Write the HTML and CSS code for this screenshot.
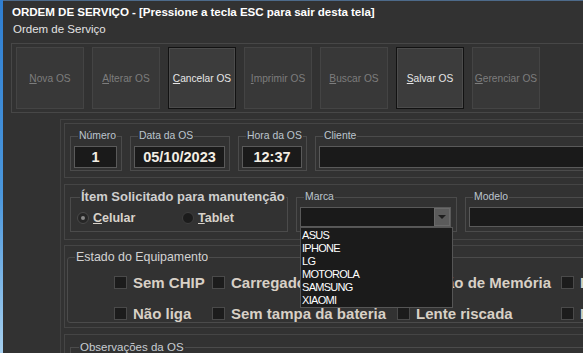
FILE: index.html
```html
<!DOCTYPE html>
<html lang="pt-BR">
<head>
<meta charset="utf-8">
<title>Ordem de Serviço</title>
<link rel="stylesheet" href="styles.css">
</head>
<body>
<div class="window">
  <div class="edge"></div>
  <div class="content">
    <div class="title">ORDEM DE SERVIÇO - [Pressione a tecla ESC para sair desta tela]</div>
    <div class="subtitle">Ordem de Serviço</div>

    <div class="toolbar">
      <div class="tbtn"><span><u>N</u>ova OS</span></div>
      <div class="tbtn"><span><u>A</u>lterar OS</span></div>
      <div class="tbtn on"><span><u>C</u>ancelar OS</span></div>
      <div class="tbtn"><span><u>I</u>mprimir OS</span></div>
      <div class="tbtn"><span><u>B</u>uscar OS</span></div>
      <div class="tbtn on"><span><u>S</u>alvar OS</span></div>
      <div class="tbtn"><span><u>G</u>erenciar OS</span></div>
    </div>

    <div class="outer">
      <div class="section s1">
        <fieldset class="grp g-num"><legend>Número</legend><div class="field">1</div></fieldset>
        <fieldset class="grp g-data"><legend>Data da OS</legend><div class="field">05/10/2023</div></fieldset>
        <fieldset class="grp g-hora"><legend>Hora da OS</legend><div class="field">12:37</div></fieldset>
        <fieldset class="grp g-cli"><legend>Cliente</legend><div class="field"></div></fieldset>
      </div>

      <div class="section s2">
        <fieldset class="grp g-item"><legend>Ítem Solicitado para manutenção</legend>
          <div class="radios">
            <div class="radio-opt"><span class="radio checked"></span><span class="rlabel"><u>C</u>elular</span></div>
            <div class="radio-opt"><span class="radio"></span><span class="rlabel"><u>T</u>ablet</span></div>
          </div>
        </fieldset>
        <fieldset class="grp g-marca"><legend>Marca</legend>
          <div class="combo">
            <div class="combo-text"></div>
            <div class="combo-btn"><span class="tri"></span></div>
            <ul class="droplist">
              <li>ASUS</li>
              <li>IPHONE</li>
              <li>LG</li>
              <li>MOTOROLA</li>
              <li>SAMSUNG</li>
              <li>XIAOMI</li>
            </ul>
          </div>
        </fieldset>
        <fieldset class="grp g-modelo"><legend>Modelo</legend><div class="field"></div></fieldset>
      </div>

      <div class="section s3">
        <fieldset class="grp g-estado"><legend>Estado do Equipamento</legend>
          <div class="checks">
            <div class="chk"><span class="box"></span><span>Sem CHIP</span></div>
            <div class="chk"><span class="box"></span><span>Carregador</span></div>
            <div class="chk"><span class="box"></span><span>Cartão de Memória</span></div>
            <div class="chk"><span class="box"></span><span>Liga</span></div>
            <div class="chk"><span class="box"></span><span>Não liga</span></div>
            <div class="chk"><span class="box"></span><span>Sem tampa da bateria</span></div>
            <div class="chk"><span class="box"></span><span>Lente riscada</span></div>
            <div class="chk"><span class="box"></span><span>Display</span></div>
          </div>
        </fieldset>
      </div>

      <div class="section s4">
        <fieldset class="grp g-obs"><legend>Observações da OS</legend><div class="memo"></div></fieldset>
      </div>
    </div>
  </div>
</div>
</body>
</html>
```

FILE: styles.css
```css
* { box-sizing: border-box; }
html, body { margin: 0; padding: 0; height: 100%; overflow: hidden; background: #323232; }
body { font-family: "Liberation Sans", Arial, sans-serif; color: #ddd; }

.window { display: flex; width: 583px; height: 353px; overflow: hidden; }
.edge { width: 3px; flex: none; background: linear-gradient(#2f7ed0, #4b97dc 55%, #a6cfee); }
.content { flex: 1; min-width: 0; border-top: 1px solid #4d6a8a; }

.title { font-weight: bold; font-size: 11.6px; line-height: 14px; color: #fff; padding: 4px 0 0 9px; white-space: nowrap; letter-spacing: -0.05px; }
.subtitle { font-size: 11.5px; line-height: 14px; color: #e2e2e2; margin: 3px 0 0 10px; white-space: nowrap; }

.toolbar { margin: 7px 0 0 8px; border: 1px solid #474747; border-right: none; padding: 3px 4px; display: flex; gap: 8px; width: 620px; }
.tbtn { width: 68px; height: 62px; flex: none; background: #383838; border: 1px solid #444; display: flex; align-items: center; justify-content: center; font-size: 10.2px; color: #7d7d7d; white-space: nowrap; }
.tbtn.on { border-color: #121212; box-shadow: inset 0 0 0 1px #4c4c4c; background: #3c3c3c; color: #e6e6e6; }
.tbtn u { text-underline-offset: 1px; }

.outer { margin: 6px 0 0 57px; border: 1px solid #424242; border-right: none; padding: 3px 0 0 3px; width: 620px; height: 300px; }
.section { border: 1px solid #454545; border-right: none; display: flex; align-items: flex-start; gap: 8px; }

.grp { margin: 0; min-width: 0; border: 1px solid #4b4b4b; padding: 0; }
.grp legend { font-size: 10.4px; line-height: 12px; color: #bcc5ce; padding: 0 1px; margin-left: 4px; white-space: nowrap; }

.field { height: 22px; background: #1a1a1a; border: 1px solid #5a5a5a; color: #f3eee4; font-weight: bold; font-size: 14.5px; line-height: 20px; text-align: center; }

.s1 { height: 55px; padding: 6px 0 0 5px; }
.s1 .grp { padding: 4px 4px 2px 3px; }
.g-num { width: 52px; }
.g-data { width: 100px; }
.g-hora { width: 69px; }
.g-cli { width: 300px; }

.s2 { height: 56px; margin-top: 6px; padding: 5px 0 0 5px; }
.s2 .grp legend { line-height: 14px; }
.g-item { width: 218px; padding: 6px 0 6px 6px; }
.g-item legend { font-size: 13px; font-weight: bold; color: #cfcfcf; margin-left: 3px; }
.radios { display: flex; height: 15px; }
.radio-opt { width: 106px; display: flex; align-items: center; gap: 4px; }
.radio { width: 12px; height: 12px; border-radius: 50%; background: #1c1c1c; border: 1px solid #3e3e3e; display: flex; align-items: center; justify-content: center; }
.radio.checked { background: #262626; border-color: #4a4a4a; }
.radio.checked::after { content: ""; width: 4px; height: 4px; border-radius: 50%; background: #8a8a8a; }
.rlabel { font-weight: bold; font-size: 12.5px; color: #d8d2ca; }

.g-marca { width: 161px; padding: 3px 5px 4px 3px; }
.g-modelo { width: 200px; padding: 3px 0 4px 3px; }
.g-modelo .field { height: 20px; }
.combo { position: relative; height: 20px; background: #1a1a1a; border: 1px solid #595959; display: flex; justify-content: flex-end; }
.combo-btn { width: 16px; height: 18px; background: #5b5b5b; border: 1px solid #6a6a6a; display: flex; align-items: center; justify-content: center; }
.tri { width: 0; height: 0; border-left: 4px solid transparent; border-right: 4px solid transparent; border-top: 4px solid #1e1e1e; }
.droplist { position: absolute; left: -1px; top: 19px; width: 153px; margin: 0; padding: 1px 0 0 1px; list-style: none; background: #1b1b1b; border: 1px solid #555; z-index: 5; }
.droplist li { font-size: 11px; line-height: 13px; color: #fff; letter-spacing: -0.7px; }

.s3 { height: 83px; margin-top: 5px; padding: 4px 0 0 2px; }
.g-estado { width: 560px; border-radius: 3px; padding: 10px 0 1px 7px; }
.g-estado legend { font-size: 12.4px; line-height: 14px; color: #d2d2d2; margin-left: 0; padding: 0 1px; }
.checks { display: grid; grid-template-columns: 98px 185px 164px 100px; row-gap: 15px; margin-left: 39px; }
.chk { display: flex; align-items: center; gap: 6px; height: 16px; font-weight: bold; font-size: 15px; color: #d8d0c6; white-space: nowrap; }
.box { width: 13px; height: 13px; flex: none; background: #1c1c1c; border: 1px solid #4a4a4a; }

.s4 { height: 40px; margin-top: 6px; padding: 5px 0 0 5px; }
.g-obs { width: 560px; padding: 4px; }
.g-obs legend { font-size: 11.5px; line-height: 14px; color: #c8cdd3; margin-left: 4px; }
.memo { height: 30px; background: #1a1a1a; border: 1px solid #5a5a5a; }
```
